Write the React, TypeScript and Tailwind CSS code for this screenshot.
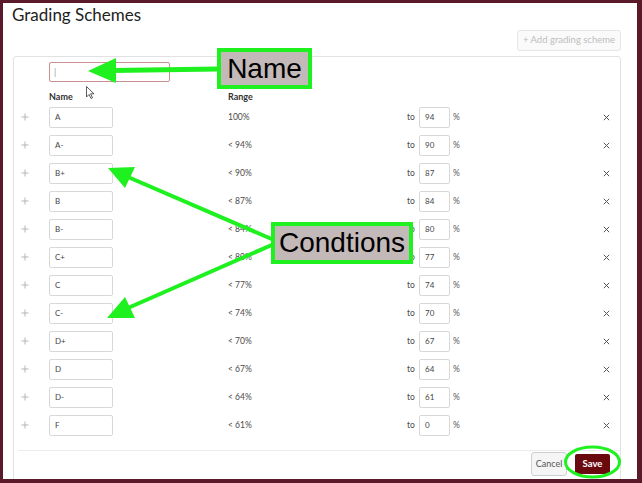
import React from 'react'

const rows = [
  { name: 'A', range: '100%', to: '94' },
  { name: 'A-', range: '< 94%', to: '90' },
  { name: 'B+', range: '< 90%', to: '87' },
  { name: 'B', range: '< 87%', to: '84' },
  { name: 'B-', range: '< 84%', to: '80' },
  { name: 'C+', range: '< 80%', to: '77' },
  { name: 'C', range: '< 77%', to: '74' },
  { name: 'C-', range: '< 74%', to: '70' },
  { name: 'D+', range: '< 70%', to: '67' },
  { name: 'D', range: '< 67%', to: '64' },
  { name: 'D-', range: '< 64%', to: '61' },
  { name: 'F', range: '< 61%', to: '0' },
]

function PlusIcon() {
  return (
    <svg width="8" height="8" viewBox="0 0 8 8">
      <path d="M4 0.5V7.5M0.5 4H7.5" stroke="#b5b5b5" strokeWidth="1" />
    </svg>
  )
}

function XIcon() {
  return (
    <svg width="7" height="7" viewBox="0 0 7 7">
      <path d="M0.8 0.8L6.2 6.2M6.2 0.8L0.8 6.2" stroke="#555" strokeWidth="1" />
    </svg>
  )
}

function GradeRow({ name, range, to }: { name: string; range: string; to: string }) {
  return (
    <div className="flex items-center h-[28px]">
      <div className="w-[35px] pl-[7px] flex items-center">
        <PlusIcon />
      </div>
      <div className="w-[64px] h-[21px] border border-[#d8d8d8] rounded-[2px] flex items-center pl-[5px] text-[8px] text-[#444]">
        {name}
      </div>
      <div className="w-[115px]" />
      <div className="w-[179px] text-[8.5px] text-[#4a4a4a]">{range}</div>
      <div className="w-[12px] text-[8.5px] text-[#4a4a4a]">to</div>
      <div className="w-[31px] h-[21px] border border-[#d8d8d8] rounded-[2px] flex items-center pl-[5px] text-[8px] text-[#444]">
        {to}
      </div>
      <div className="ml-[3px] text-[8.5px] text-[#555]">%</div>
      <div className="flex-1 flex justify-end pr-[10px]">
        <XIcon />
      </div>
    </div>
  )
}

export default function App() {
  return (
    <div className="relative w-[642px] h-[483px] overflow-hidden bg-[#5b1a2a] font-['Lato',sans-serif]">
      <div className="absolute left-[3px] top-[3px] right-[5px] bottom-[4px] bg-white overflow-hidden">
        {/* Header */}
        <div className="pl-[9px] pt-[1px] h-[27px] text-[17px] leading-[22px] text-[#222]">Grading Schemes</div>
        <div className="flex justify-end pr-[16px]">
          <div className="h-[21px] w-[104px] flex items-center justify-center border border-[#e6e6e6] rounded-[3px] bg-[#fafafa] text-[9.5px] text-[#bdbdbd]">
            + Add grading scheme
          </div>
        </div>

        {/* Panel */}
        <div className="ml-[10px] mr-[16px] mt-[5px] h-[500px] border border-[#e2e2e2] rounded-[3px]">
          <div className="pt-[5px] pl-[35px]">
            <div className="w-[121px] h-[20px] border border-[#c78f8f] rounded-[2px] flex items-center pl-[4px] text-[9px] text-[#999]">
              |
            </div>
          </div>
          <div className="mt-[8px] h-[13px] flex items-center text-[9px] font-bold text-[#333]">
            <div className="w-[35px]" />
            <div className="w-[179px]">Name</div>
            <div>Range</div>
          </div>
          <div>
            {rows.map((r) => (
              <GradeRow key={r.name} {...r} />
            ))}
          </div>
          <div className="mt-[11px] ml-[4px] border-t border-[#ececec]" />
          <div className="flex justify-end items-center gap-[8px] pr-[10px] pt-[1px]">
            <div className="h-[24px] w-[36px] flex items-center justify-center border border-[#d0d0d0] rounded-[3px] bg-[#f5f5f5] text-[9px] text-[#555]">
              Cancel
            </div>
            <div className="h-[20px] w-[35px] flex items-center justify-center rounded-[2px] bg-[#6a0a0f] text-[9.5px] font-bold text-white">
              Save
            </div>
          </div>
        </div>
      </div>

      {/* Annotation overlay */}
      <svg className="absolute left-0 top-0 pointer-events-none" width="642" height="483" viewBox="0 0 642 483">
        {/* cursor */}
        <path d="M86.5 86.5 L86.5 97 L89 94.5 L91 98.5 L92.5 97.8 L90.6 93.8 L94 93.8 Z" fill="#fff" stroke="#333" strokeWidth="0.8" />
        {/* Name arrow */}
        <line x1="218" y1="69" x2="112" y2="70.5" stroke="#1ff01f" strokeWidth="5" />
        <polygon points="88,71 116,58 116,83" fill="#1ff01f" />
        {/* Conditions arrows */}
        <line x1="274" y1="240" x2="128" y2="177" stroke="#1ff01f" strokeWidth="4" />
        <polygon points="108,168 135,167 125,188" fill="#1ff01f" />
        <line x1="274" y1="244" x2="128" y2="308" stroke="#1ff01f" strokeWidth="4" />
        <polygon points="107,318 135,318 125,297" fill="#1ff01f" />
        {/* Save ellipse */}
        <ellipse cx="592.5" cy="462" rx="27" ry="15" fill="none" stroke="#1ff01f" strokeWidth="3" />
      </svg>

      <div className="absolute left-[217px] top-[48px] w-[95px] h-[41px] border-[4px] border-[#1ff01f] bg-[#c3b9b9] flex items-center justify-center font-['Liberation_Sans',Arial,sans-serif] text-[28px] text-black">
        Name
      </div>
      <div className="absolute left-[271px] top-[222px] w-[142px] h-[42px] border-[4px] border-[#1ff01f] bg-[#c3b9b9] flex items-center justify-center font-['Liberation_Sans',Arial,sans-serif] text-[28px] text-black">
        Condtions
      </div>
    </div>
  )
}
